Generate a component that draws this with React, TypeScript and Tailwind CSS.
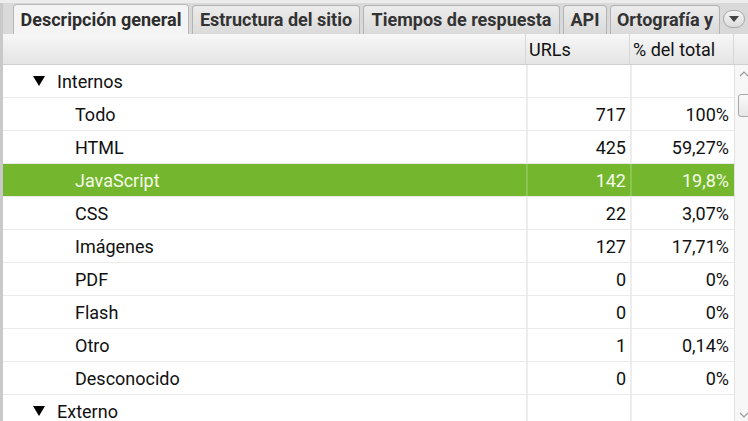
import React from "react";

// TAB STRIP + OVERVIEW TREE TABLE
const tabs = [
  { label: "Descripción general", w: "w-[176px]", active: true },
  { label: "Estructura del sitio", w: "w-[168px]" },
  { label: "Tiempos de respuesta", w: "w-[197px]" },
  { label: "API", w: "w-[44px]" },
  { label: "Ortografía y", w: "w-[110px]" },
];

interface Row {
  name: string;
  urls?: string;
  pct?: string;
  group?: boolean;
  selected?: boolean;
}

const rows: Row[] = [
  { name: "Internos", group: true },
  { name: "Todo", urls: "717", pct: "100%" },
  { name: "HTML", urls: "425", pct: "59,27%" },
  { name: "JavaScript", urls: "142", pct: "19,8%", selected: true },
  { name: "CSS", urls: "22", pct: "3,07%" },
  { name: "Imágenes", urls: "127", pct: "17,71%" },
  { name: "PDF", urls: "0", pct: "0%" },
  { name: "Flash", urls: "0", pct: "0%" },
  { name: "Otro", urls: "1", pct: "0,14%" },
  { name: "Desconocido", urls: "0", pct: "0%" },
  { name: "Externo", group: true },
];

export default function App() {
  return (
    <div className="w-[748px] h-[421px] overflow-hidden bg-white flex flex-col font-['Roboto',sans-serif] text-[#111]">
      {/* TABS */}
      <div className="h-[34px] shrink-0 bg-[#d9d9d9] border-t-[3px] border-[#ececec] flex">
        <div className="w-[3px] bg-[#c9c9c9]" />
        <div className="flex items-end gap-[3px] pl-[10px] pt-[2px]">
          {tabs.map((t) => (
            <div
              key={t.label}
              className={`${t.w} shrink-0 h-[29px] rounded-t-[4px] border border-b-0 flex items-center justify-center text-[18px] leading-none font-bold whitespace-nowrap overflow-hidden ${
                t.active
                  ? "bg-[#f4f4f4] border-[#b8b8b8] text-[#2d2d2d] h-[30px]"
                  : "bg-gradient-to-b from-[#ececec] to-[#dadada] border-[#b3b3b3] text-[#333]"
              }`}
            >
              {t.label}
            </div>
          ))}
        </div>
        <div className="ml-auto flex items-center pr-[3px] pt-[1px]">
          <div className="w-[22px] h-[18px] rounded-full border border-[#a8a8a8] bg-gradient-to-b from-[#f4f4f4] to-[#dcdcdc] flex items-center justify-center">
            <svg width="10" height="6" viewBox="0 0 10 6">
              <path d="M0 0 L10 0 L5 6 Z" fill="#444" />
            </svg>
          </div>
        </div>
      </div>

      {/* TABLE */}
      <div className="flex-1 flex min-h-0">
        <div className="w-[3px] bg-[#c9c9c9] shrink-0" />
        <div className="flex-1 flex flex-col min-w-0">
          {/* header */}
          <div className="h-[31px] shrink-0 flex bg-gradient-to-b from-[#f7f7f7] to-[#e4e4e4] border-b border-[#d0d0d0] text-[18px] text-[#111]">
            <div className="w-[523px] border-r border-[#d6d6d6]" />
            <div className="w-[104px] border-r border-[#d6d6d6] pl-[3px] flex items-center">URLs</div>
            <div className="w-[104px] border-r border-[#d6d6d6] pl-[3px] flex items-center">% del total</div>
            <div className="flex-1" />
          </div>
          <div className="flex-1 flex min-h-0">
            <div className="flex flex-col w-[731px]">
              {rows.map((r) => (
                <div
                  key={r.name}
                  className={`h-[33px] shrink-0 flex border-b border-[#ebebeb] text-[18px] ${
                    r.selected ? "bg-[#74b72e] text-[#f4fbe9] border-[#74b72e]" : ""
                  }`}
                >
                  <div className="w-[523px] flex items-center">
                    {r.group ? (
                      <>
                        <svg width="12" height="10" viewBox="0 0 12 10" className="ml-[30px] mr-[12px]">
                          <path d="M0 0 L12 0 L6 10 Z" fill="#000" />
                        </svg>
                        <span>{r.name}</span>
                      </>
                    ) : (
                      <span className="pl-[72px]">{r.name}</span>
                    )}
                  </div>
                  <div className={`w-[104px] border-l-2 ${r.selected ? "border-[#8cc452]" : "border-[#ededed]"} flex items-center justify-end pr-[4px]`}>
                    {r.urls}
                  </div>
                  <div className={`w-[104px] border-l-2 ${r.selected ? "border-[#8cc452]" : "border-[#ededed]"} flex items-center justify-end pr-[5px]`}>
                    {r.pct}
                  </div>
                </div>
              ))}
            </div>
            {/* scrollbar */}
            <div className="flex-1 border-l border-[#e2e2e2] bg-[#f7f7f7] flex flex-col items-center relative">
              <svg width="10" height="6" viewBox="0 0 10 6" className="mt-[6px]">
                <path d="M1 5 L5 1 L9 5" stroke="#999" strokeWidth="1.2" fill="none" />
              </svg>
              <div className="mt-[17px] ml-[3px] w-[14px] h-[23px] rounded-[3px] border border-[#a8a8a8] bg-gradient-to-b from-[#fafafa] to-[#e6e6e6]" />
              <svg width="10" height="6" viewBox="0 0 10 6" className="mt-auto mb-[3px]">
                <path d="M1 1 L5 5 L9 1" stroke="#999" strokeWidth="1.2" fill="none" />
              </svg>
            </div>
          </div>
        </div>
      </div>
    </div>
  );
}
